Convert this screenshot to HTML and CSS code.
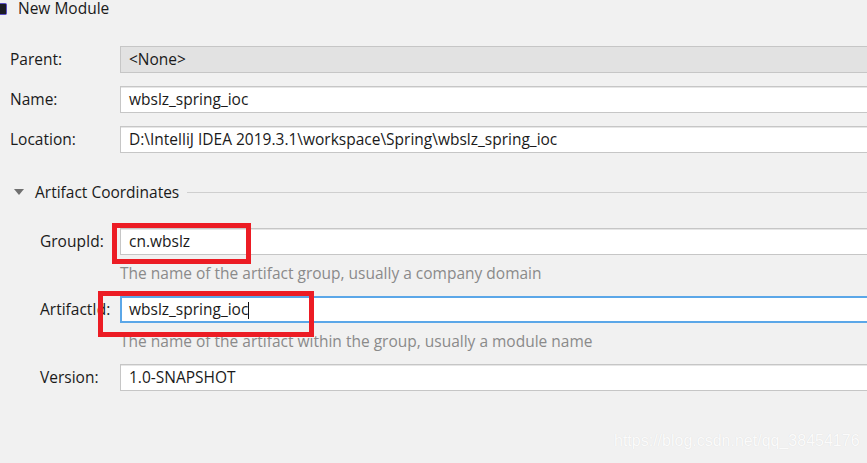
FILE: index.html
```html
<!DOCTYPE html>
<html>
<head>
<meta charset="utf-8">
<link rel="stylesheet" href="styles.css">
</head>
<body>
<div class="title">
  <span class="app-icon"></span>
  <span class="title-text">New Module</span>
</div>
<div class="form">
  <div class="row top">
    <label class="label">Parent:</label>
    <div class="field disabled">&lt;None&gt;</div>
  </div>
  <div class="row top">
    <label class="label">Name:</label>
    <div class="field">wbslz_spring_ioc</div>
  </div>
  <div class="row top">
    <label class="label">Location:</label>
    <div class="field">D:\IntelliJ IDEA 2019.3.1\workspace\Spring\wbslz_spring_ioc</div>
  </div>

  <div class="section">
    <span class="triangle"></span>
    <span class="section-text">Artifact Coordinates</span>
    <span class="section-line"></span>
  </div>

  <div class="row sub group">
    <label class="label">GroupId:</label>
    <div class="field">cn.wbslz</div>
    <span class="mark mark-group"></span>
  </div>
  <div class="hint">The name of the artifact group, usually a company domain</div>

  <div class="row sub artifact">
    <label class="label">ArtifactId:</label>
    <div class="field focus">wbslz_spring_ioc<span class="caret"></span></div>
    <span class="mark mark-artifact"></span>
  </div>
  <div class="hint">The name of the artifact within the group, usually a module name</div>

  <div class="row sub version">
    <label class="label">Version:</label>
    <div class="field">1.0-SNAPSHOT</div>
  </div>
</div>
<div class="watermark">https://blog.csdn.net/qq_38454176</div>
</body>
</html>
```

FILE: styles.css
```css
html, body {
  margin: 0;
  padding: 0;
  width: 867px;
  height: 463px;
  overflow: hidden;
  background: #f1f1f1;
  font-family: "Open Sans", "Noto Sans", sans-serif;
  font-size: 15.5px;
  color: #1a1a1a;
  position: relative;
}

.title {
  height: 17px;
  display: flex;
  align-items: center;
  gap: 11px;
}

.app-icon {
  width: 7px;
  height: 12px;
  margin-top: 1px;
  background: #1c1c24;
  border: 1px solid #5b4fc4;
  border-left: none;
  border-radius: 0 2px 2px 0;
  box-sizing: border-box;
}

.title-text {
  line-height: 17px;
}

.form {
  padding-top: 29px;
  display: flex;
  flex-direction: column;
}

.row {
  position: relative;
  display: grid;
  grid-template-columns: 120px 1fr;
  align-items: center;
  height: 27px;
}

.row.top + .row.top {
  margin-top: 13px;
}

.row.top .label {
  padding-left: 10px;
}

.row.sub .label {
  padding-left: 40px;
}

.label {
  line-height: 27px;
  white-space: nowrap;
}

.field {
  height: 27px;
  box-sizing: border-box;
  background: #fff;
  border: 1px solid #c6c6c6;
  border-right: none;
  padding-left: 8px;
  line-height: 25px;
  white-space: nowrap;
  overflow: hidden;
  box-shadow: inset 0 1px 0 #e6e6e6;
}

.field.disabled {
  background: #e2e2e2;
  box-shadow: none;
}

.field.focus {
  border: 2px solid #5ba7e8;
  border-right: none;
  padding-left: 7px;
  line-height: 23px;
  box-shadow: none;
}

.caret {
  display: inline-block;
  width: 1px;
  height: 17px;
  background: #111;
  vertical-align: middle;
}

.section {
  margin-top: 29px;
  height: 20px;
  display: flex;
  align-items: center;
}

.triangle {
  width: 0;
  height: 0;
  margin-left: 14px;
  border-left: 5px solid transparent;
  border-right: 5px solid transparent;
  border-top: 6px solid #707070;
}

.section-text {
  margin-left: 11px;
  line-height: 20px;
}

.section-line {
  flex: 1;
  height: 1px;
  background: #cfcfcf;
  margin-left: 8px;
}

.row.group {
  margin-top: 26px;
}

.hint {
  margin-top: 8px;
  padding-left: 120px;
  height: 20px;
  line-height: 20px;
  color: #8a8a8a;
  white-space: nowrap;
}

.row.artifact {
  margin-top: 13px;
}

.row.version {
  margin-top: 13px;
}

.mark {
  position: absolute;
  border: 5px solid #ec1c24;
  box-sizing: border-box;
}

.mark-group {
  left: 112px;
  top: -5px;
  width: 139px;
  height: 41px;
}

.mark-artifact {
  left: 98px;
  top: -5px;
  width: 216px;
  height: 46px;
}

.watermark {
  position: absolute;
  left: 614px;
  top: 432px;
  font-family: "Liberation Sans", Arial, sans-serif;
  font-size: 16px;
  color: #fbfbfb;
  text-shadow: 0 0 1px rgba(0, 0, 0, 0.1);
  white-space: nowrap;
}
```
